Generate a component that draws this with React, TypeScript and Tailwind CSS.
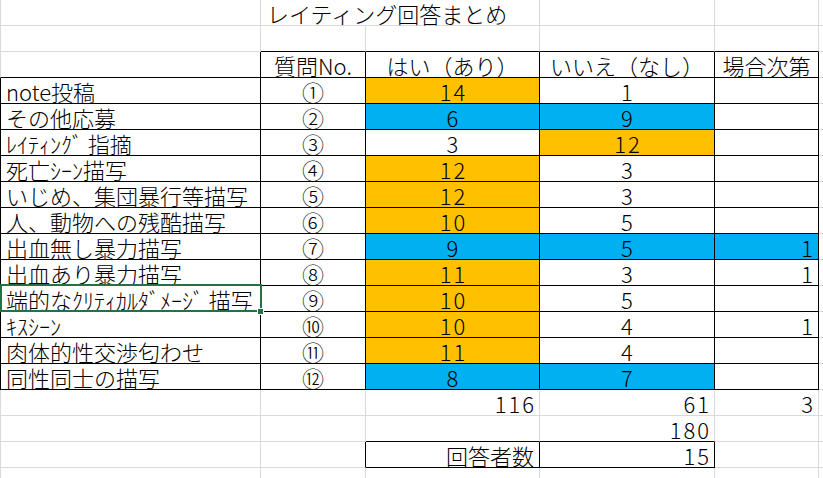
import React from "react";

type Row = {
  label: string;
  no: string;
  yes: string;
  no2: string;
  dep: string;
  yesBg: string;
  noBg: string;
  depBg: string;
};

const O = "bg-[#ffc000]";
const B = "bg-[#00b0f0]";
const W = "bg-white";

const rows: Row[] = [
  { label: "note投稿", no: "①", yes: "14", no2: "1", dep: "", yesBg: O, noBg: W, depBg: W },
  { label: "その他応募", no: "②", yes: "6", no2: "9", dep: "", yesBg: B, noBg: B, depBg: W },
  { label: "ﾚｲﾃｨﾝｸﾞ 指摘", no: "③", yes: "3", no2: "12", dep: "", yesBg: W, noBg: O, depBg: W },
  { label: "死亡ｼｰﾝ描写", no: "④", yes: "12", no2: "3", dep: "", yesBg: O, noBg: W, depBg: W },
  { label: "いじめ、集団暴行等描写", no: "⑤", yes: "12", no2: "3", dep: "", yesBg: O, noBg: W, depBg: W },
  { label: "人、動物への残酷描写", no: "⑥", yes: "10", no2: "5", dep: "", yesBg: O, noBg: W, depBg: W },
  { label: "出血無し暴力描写", no: "⑦", yes: "9", no2: "5", dep: "1", yesBg: B, noBg: B, depBg: B },
  { label: "出血あり暴力描写", no: "⑧", yes: "11", no2: "3", dep: "1", yesBg: O, noBg: W, depBg: W },
  { label: "端的なｸﾘﾃｨｶﾙﾀﾞﾒｰｼﾞ 描写", no: "⑨", yes: "10", no2: "5", dep: "", yesBg: O, noBg: W, depBg: W },
  { label: "ｷｽｼｰﾝ", no: "⑩", yes: "10", no2: "4", dep: "1", yesBg: O, noBg: W, depBg: W },
  { label: "肉体的性交渉匂わせ", no: "⑪", yes: "11", no2: "4", dep: "", yesBg: O, noBg: W, depBg: W },
  { label: "同性同士の描写", no: "⑫", yes: "8", no2: "7", dep: "", yesBg: B, noBg: B, depBg: W },
];

const GR = "border-r-[#dadada]";
const BR = "border-r-black";
const GB = "border-b-[#dadada]";
const BB = "border-b-black";

function Cell({
  children,
  r,
  b,
  bg = W,
  align = "left",
  extra = "",
}: {
  children?: React.ReactNode;
  r: string;
  b: string;
  bg?: string;
  align?: "left" | "center" | "right";
  extra?: string;
}) {
  const a =
    align === "center" ? "justify-center" : align === "right" ? "justify-end pr-[5px]" : "justify-start pl-[5px]";
  return (
    <div
      className={`h-[26px] border-r border-b ${r} ${b} ${bg} ${a} ${extra} flex items-center whitespace-nowrap leading-[26px]`}
    >
      {children}
    </div>
  );
}

function Num({ children }: { children: React.ReactNode }) {
  return <span className="tracking-[2px] -mr-[2px]">{children}</span>;
}

export default function App() {
  return (
    <div
      className="relative w-[823px] h-[478px] overflow-hidden bg-white text-black text-[22px] font-light"
      style={{ fontFamily: '"Noto Sans CJK JP", "Noto Sans", sans-serif' }}
    >
      <div className="grid grid-cols-[261px_105px_174px_175px_104px_1fr]">
        {/* Row 1 */}
        <Cell r={GR} b={GB} extra="border-l border-l-[#dadada]" />
        <Cell r={GR} b={GB} extra="col-span-2 pl-[6px]">
          レイティング回答まとめ
        </Cell>
        <Cell r={GR} b={GB} />
        <Cell r={GR} b={GB} />
        <Cell r={GR} b={GB} />
        {/* Row 2 */}
        <Cell r={GR} b={GB} extra="border-l border-l-[#dadada]" />
        <Cell r={GR} b={BB} />
        <Cell r={GR} b={BB} />
        <Cell r={GR} b={BB} />
        <Cell r={GR} b={BB} />
        <Cell r={GR} b={GB} />
        {/* Row 3 header */}
        <Cell r={BR} b={BB} extra="border-l border-l-[#dadada]" />
        <Cell r={BR} b={BB} align="center">質問No.</Cell>
        <Cell r={BR} b={BB} align="center">はい（あり）</Cell>
        <Cell r={BR} b={BB} align="center">いいえ（なし）</Cell>
        <Cell r={BR} b={BB} align="center">場合次第</Cell>
        <Cell r={GR} b={GB} />
        {/* Data rows */}
        {rows.map((row, i) => (
          <React.Fragment key={i}>
            <Cell r={BR} b={BB} extra="border-l border-l-black">{row.label}</Cell>
            <Cell r={BR} b={BB} align="center">{row.no}</Cell>
            <Cell r={BR} b={BB} align="center" bg={row.yesBg}><Num>{row.yes}</Num></Cell>
            <Cell r={BR} b={BB} align="center" bg={row.noBg}><Num>{row.no2}</Num></Cell>
            <Cell r={BR} b={BB} align="right" bg={row.depBg}>{row.dep ? <Num>{row.dep}</Num> : null}</Cell>
            <Cell r={GR} b={GB} />
          </React.Fragment>
        ))}
        {/* Row 16 totals */}
        <Cell r={GR} b={GB} extra="border-l border-l-[#dadada]" />
        <Cell r={GR} b={GB} />
        <Cell r={GR} b={GB} align="right"><Num>116</Num></Cell>
        <Cell r={GR} b={GB} align="right"><Num>61</Num></Cell>
        <Cell r={GR} b={GB} align="right"><Num>3</Num></Cell>
        <Cell r={GR} b={GB} />
        {/* Row 17 */}
        <Cell r={GR} b={GB} extra="border-l border-l-[#dadada]" />
        <Cell r={GR} b={GB} />
        <Cell r={GR} b={BB} />
        <Cell r={GR} b={BB} align="right"><Num>180</Num></Cell>
        <Cell r={GR} b={GB} />
        <Cell r={GR} b={GB} />
        {/* Row 18 */}
        <Cell r={GR} b={GB} extra="border-l border-l-[#dadada]" />
        <Cell r={BR} b={GB} />
        <Cell r={BR} b={BB} align="right">回答者数</Cell>
        <Cell r={BR} b={BB} align="right"><Num>15</Num></Cell>
        <Cell r={GR} b={GB} />
        <Cell r={GR} b={GB} />
        {/* Row 19 */}
        <Cell r={GR} b={GB} extra="border-l border-l-[#dadada]" />
        <Cell r={GR} b={GB} />
        <Cell r={GR} b={GB} />
        <Cell r={GR} b={GB} />
        <Cell r={GR} b={GB} />
        <Cell r={GR} b={GB} />
      </div>
      {/* selection */}
      <div className="absolute left-0 top-[284px] w-[262px] h-[28px] border-2 border-[#217346] pointer-events-none" />
      <div className="absolute left-[257px] top-[308px] w-[7px] h-[7px] bg-[#217346] border border-white" />
    </div>
  );
}
